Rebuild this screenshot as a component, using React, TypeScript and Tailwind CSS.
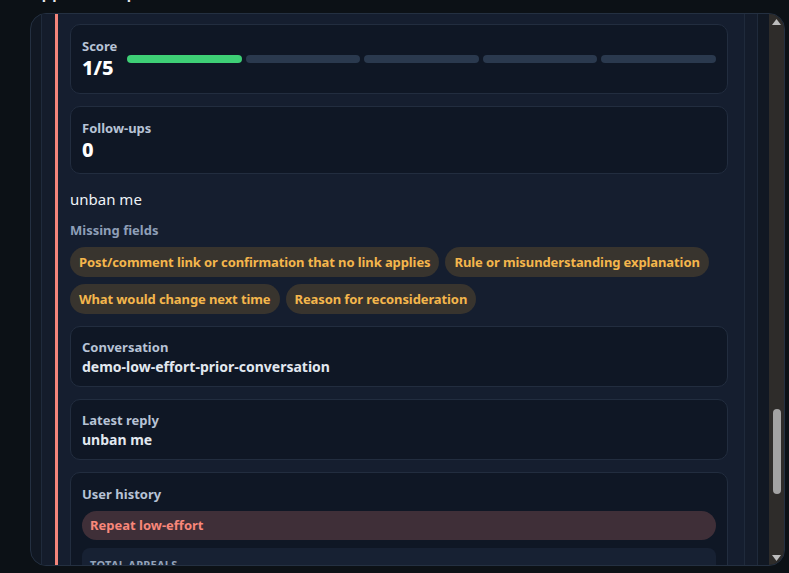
import React, { useLayoutEffect, useRef } from "react";

const missingFields = [
  "Post/comment link or confirmation that no link applies",
  "Rule or misunderstanding explanation",
  "What would change next time",
  "Reason for reconsideration",
];

const InfoCard = ({ label, value }: { label: string; value: string }) => (
  <div className="rounded-[10px] border border-[#222d3f] bg-[#0f1725] px-[11px] pt-[11px] pb-[9px]">
    <div className="text-[13px] leading-[18px] font-bold text-[#b7c3d6]">{label}</div>
    <div className="text-[14px] leading-[21px] font-bold text-[#e2e8f0]">{value}</div>
  </div>
);

const Arrow = ({ down }: { down?: boolean }) => (
  <div className="flex h-[15px] w-full items-center justify-center">
    <svg width="9" height="6" viewBox="0 0 9 6">
      <path d={down ? "M0 0 H9 L4.5 6 Z" : "M0 6 H9 L4.5 0 Z"} fill="#bdbdbd" />
    </svg>
  </div>
);

export default function App() {
  const scrollRef = useRef<HTMLDivElement>(null);
  const scoreRef = useRef<HTMLDivElement>(null);

  // Put the score card near the top of the view, as in the queue where it was taken
  useLayoutEffect(() => {
    const box = scrollRef.current;
    const score = scoreRef.current;
    if (!box || !score) return;
    const offset =
      score.getBoundingClientRect().top - box.getBoundingClientRect().top;
    box.scrollTop = offset - 10;
  }, []);

  const score = 1;

  return (
    <div
      className="h-screen overflow-hidden bg-[#0c1116] pl-[30px] pr-[4px]"
      style={{ fontFamily: '"Noto Sans", "Open Sans", sans-serif' }}
    >
      <h2 className="-mt-[20px] h-[33px] text-[17px] leading-[24px] font-semibold text-[#e5e7eb]">
        Appeal samples
      </h2>

      <div className="flex h-[553px] overflow-hidden rounded-[16px] border border-[#243041] bg-[#111823]">
        <div ref={scrollRef} className="min-w-0 flex-1 overflow-hidden">
          <div className="pl-[10px] pr-[11px]">
            <div className="border-x border-[#1f2a3b] bg-[#141c2b] pl-[13px] pr-[12px]">
              <div className="border-l-[3px] border-r border-l-[#f4847a] border-r-[#1f2a3b] bg-[#151e2f] pl-[12px] pr-[16px]">
                {/* earlier parts of this appeal, out of view */}
                <div className="h-[120px]" />

                <div
                  ref={scoreRef}
                  className="flex items-center gap-[10px] rounded-[10px] border border-[#222d3f] bg-[#0f1725] px-[11px] pt-[12px] pb-[13px]"
                >
                  <div>
                    <div className="text-[13px] leading-[18px] font-bold text-[#b7c3d6]">Score</div>
                    <div className="text-[20px] leading-[25px] font-extrabold text-white">
                      {score}/5
                    </div>
                  </div>
                  <div className="flex flex-1 gap-[4px]">
                    {[0, 1, 2, 3, 4].map((i) => (
                      <div
                        key={i}
                        className={`h-[8px] flex-1 rounded-full ${
                          i < score ? "bg-[#3ecf76]" : "bg-[#2a394e]"
                        }`}
                      />
                    ))}
                  </div>
                </div>

                <div className="mt-3 rounded-[10px] border border-[#222d3f] bg-[#0f1725] px-[11px] pt-[12px] pb-[11px]">
                  <div className="text-[13px] leading-[18px] font-bold text-[#b7c3d6]">Follow-ups</div>
                  <div className="text-[20px] leading-[25px] font-extrabold text-white">0</div>
                </div>

                <p className="mt-[13px] text-[15px] leading-6 text-[#eef2f7]">unban me</p>

                <div className="mt-[10px] text-[13px] leading-[18px] font-bold text-[#8e9fb8]">
                  Missing fields
                </div>
                <div className="mt-2 flex flex-wrap gap-x-[6px] gap-y-[7px]">
                  {missingFields.map((f) => (
                    <span
                      key={f}
                      className="rounded-full bg-[#38342e] px-[9px] py-[6px] text-[13px] leading-[18px] font-bold tracking-[-0.1px] text-[#f4b64c]"
                    >
                      {f}
                    </span>
                  ))}
                </div>

                <div className="mt-3 flex flex-col gap-3">
                  <InfoCard label="Conversation" value="demo-low-effort-prior-conversation" />
                  <InfoCard label="Latest reply" value="unban me" />

                  <div className="rounded-[10px] border border-[#222d3f] bg-[#0f1725] px-[11px] pt-[12px] pb-[11px]">
                    <div className="text-[13px] leading-[18px] font-bold text-[#b7c3d6]">User history</div>
                    <div className="mt-2 rounded-full bg-[#3f2f38] px-[8px] py-[5px] text-[13px] leading-[19px] font-bold text-[#f8877a]">
                      Repeat low-effort
                    </div>
                    <div className="mt-2 flex flex-col gap-2">
                      {[
                        ["Total appeals", "3"],
                        ["Low-effort appeals", "2"],
                      ].map(([k, v]) => (
                        <div key={k} className="rounded-lg bg-[#172133] px-[8px] py-[9px]">
                          <div className="text-[11px] leading-[16px] font-bold uppercase tracking-wide text-[#94a3b8]">
                            {k}
                          </div>
                          <div className="text-[16px] leading-[22px] font-bold text-white">{v}</div>
                        </div>
                      ))}
                    </div>
                  </div>
                </div>

                <div className="h-[60px]" />
              </div>
            </div>
          </div>
        </div>

        {/* scrollbar */}
        <div className="flex w-[15px] shrink-0 flex-col bg-[#2e2c2a]">
          <Arrow />
          <div className="flex-1 pt-[380px]">
            <div className="mx-auto h-[85px] w-[8px] rounded-full bg-[#a3a3a3]" />
          </div>
          <Arrow down />
        </div>
      </div>
    </div>
  );
}
